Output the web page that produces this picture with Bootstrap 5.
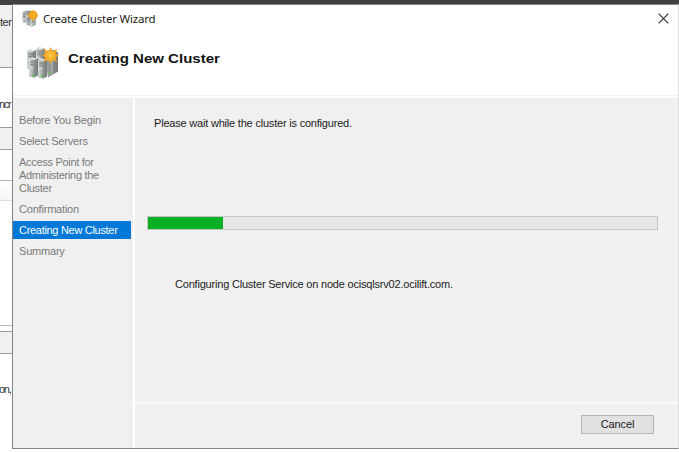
<!DOCTYPE html>
<html lang="en">
<head>
<meta charset="utf-8">
<title>Create Cluster Wizard</title>
<meta name="viewport" content="width=device-width, initial-scale=1">
<link href="https://cdn.jsdelivr.net/npm/bootstrap@5.3.0/dist/css/bootstrap.min.css" rel="stylesheet">
<style>
body{font:11px/13px "Liberation Sans",Arial,sans-serif;letter-spacing:-.2px;color:#1c1c1c;width:679px;height:452px;background:#fff}
.desk-top{height:5px;background:#414141;flex:none}
.behind{width:13px;flex:none}
.behind>div{white-space:nowrap;flex:none;color:#333;letter-spacing:-.5px}
.behind .strip-b,.behind .strip-i{letter-spacing:-1.3px;text-indent:-1px}
.strip-a{height:63px;background:#f0f0f0;border-bottom:1px solid #999;padding-top:11px}
.strip-b{height:59px;padding-top:30px}
.strip-c{height:23px;background:#f0f0f0;border:solid #999;border-width:1px 0}
.strip-d{height:31px;border-bottom:1px solid #b0b0b5}
.strip-e{height:20px;background:linear-gradient(#fff,#f4f5f7);border-bottom:1px solid #dcdfe2}
.strip-f{height:125px;border-bottom:1px solid #b4bcc0}
.strip-g{height:5px}
.strip-h{height:23px;background:#f0f0f0;border:solid #999;border-width:1px 0}
.strip-i{height:98px;padding-top:29px}
.wizard{left:12px;top:4px;width:667px;height:445px;border:1px solid #858585;border-right-color:#ddd;background:#fff}
.caption{height:27px;padding:0 9px 0 8px;flex:none}
.caption-text{font:11.5px/15px "Noto Sans","Open Sans",sans-serif;letter-spacing:-.2px;color:#222;margin-left:5px}
.banner{height:63px;padding:11px 0 0 13px;flex:none}
.banner h1{font:bold 13px/16px "Liberation Sans",Arial,sans-serif;letter-spacing:0;color:#111;margin:8px 0 0 9px;transform:scaleX(1.155);transform-origin:0 0}
.rule{height:3px;border-top:1px solid #f0f0f0;flex:none}
.steps{width:120px;background:#f0f0f0;padding-top:12.5px;flex:none;color:#7a7a7a}
.steps a{color:inherit;text-decoration:none;display:block;padding:3px 20px 3px 6px;margin-bottom:2.5px;white-space:nowrap}
.steps a.multi{margin-top:-1px;letter-spacing:-.3px}
.steps a.current{background:#0078d7;color:#fff;margin:-.5px 2px 3px 0;padding:3px 0 2px 6px;letter-spacing:-.3px}
.pane{background:#f0f0f0;margin-left:2px;min-width:0}
.msg{padding:19px 0 0 19px;height:118px}
.meter{height:14px;margin:0 20px 0 12px;border:1px solid #c6c6c6;border-radius:0;background:#e6e6e6}
.meter .progress-bar{background:#06b025}
.status{padding:48px 0 0 40px}
.foot{height:46px;border-top:2px solid #fbfbfb;padding:11px 24px 0 0}
.cancel-btn{width:73px;height:19px;padding:0;border:1px solid #b5b5b5;border-radius:0;background:#e1e1e1;font-size:11px;line-height:17px;letter-spacing:-.15px;color:#222}
.t{display:inline-block;white-space:nowrap}
</style>
</head>
<body class="overflow-hidden position-relative">
<svg width="0" height="0" class="position-absolute" aria-hidden="true">
<defs>
<linearGradient id="face"><stop offset="0" stop-color="#d8dcdc"/><stop offset=".5" stop-color="#b4baba"/><stop offset="1" stop-color="#929899"/></linearGradient>
<linearGradient id="side"><stop offset="0" stop-color="#a9adad"/><stop offset="1" stop-color="#747b7b"/></linearGradient>
<radialGradient id="glow"><stop offset="0" stop-color="#ffc943"/><stop offset="1" stop-color="#ee9410"/></radialGradient>
<g id="tower"><path d="M0 1.5 3 0 9 1v17l-3.500 2L0 19z" fill="url(#side)"/><path d="M0 1.500 5.500 2.500V20L0 19z" fill="url(#face)"/><path d="M0 1.500 3 0 9 1 5.500 2.500z" fill="#e1e4e4"/><path d="M1 4.300l3.500.7M1 6.600l3.500.7" stroke="#697272" stroke-width=".8"/><path d="M1 10l3.500.600" stroke="#eef2f2" stroke-width=".8"/><circle cx="4" cy="17.500" r=".9" fill="#4fc527"/></g>
<symbol id="cluster" viewBox="0 0 33 32"><use href="#tower" x="1" y="2"/><use href="#tower" x="10" y="0"/><path d="M18 4 26 2 32 5v19L22 30z" fill="url(#side)"/><path d="M26 9v18" stroke="#c9cdcd" stroke-width=".8"/><use href="#tower" x="3" y="10"/><use href="#tower" x="12" y="11"/><circle cx="24.500" cy="25" r="1" fill="#4fc527"/><path d="M24.500-.5 26.500 3.800 31.300 1.500 29.500 6 33 8 29.500 10 31.300 14.500 26.500 12.500 24.500 16.500 22.500 12.500 17.500 14.500 19.500 10 16 8 19.500 6 17.500 1.500 22.500 3.800z" fill="url(#glow)"/></symbol>
<symbol id="cluster-small" viewBox="0 0 16 17"><path d="M1 1.500l5-1v12l-5-1z" fill="url(#face)"/><path d="M5 1l4-.5v13l-4-1z" fill="url(#side)"/><path d="M4.500 5l4 .5V15l-4-1z" fill="url(#face)"/><path d="M9 6l5-1v9l-5 2.500z" fill="url(#face)"/><path d="M2 4h2M2 6h2M5.500 8l2 .3M5.500 10l2 .3M10 11l2 .3" stroke="#6d7879"/><path d="M6.500 13.200h1M11 14.500h1" stroke="#4fc527"/><circle cx="11.300" cy="5" r="4.300" fill="url(#glow)"/><path d="M11.300 0v10M6.300 5h10" stroke="#f6a51d"/></symbol>
</defs>
</svg>
<div class="d-flex flex-column h-100">
  <div class="desk-top"></div>
  <div class="behind d-flex flex-column">
    <div class="strip-a">ter</div><div class="strip-b">ncr</div><div class="strip-c"></div><div class="strip-d"></div><div class="strip-e"></div><div class="strip-f"></div><div class="strip-g"></div><div class="strip-h"></div><div class="strip-i">on,</div>
  </div>
</div>
<main class="wizard position-absolute d-flex flex-column">
  <header class="caption d-flex align-items-center">
    <svg width="18" height="18"><use href="#cluster-small" width="17" height="18"/></svg>
    <span class="caption-text t ms-1">Create Cluster Wizard</span>
    <svg class="ms-auto" width="11" height="11" viewBox="0 0 11 11"><path d="M.7.7l9.600 9.600M10.300.7.7 10.300" stroke="#333" stroke-width="1.200"/></svg>
  </header>
  <div class="banner d-flex align-items-start">
    <svg class="mt-1" width="33" height="33"><use href="#cluster" width="33" height="33"/></svg>
    <h1 class="t">Creating New Cluster</h1>
  </div>
  <div class="rule"></div>
  <div class="d-flex flex-grow-1">
    <nav class="steps">
      <a href="#">Before You Begin</a>
      <a href="#">Select Servers</a>
      <a href="#" class="multi">Access Point for<br>Administering the<br>Cluster</a>
      <a href="#">Confirmation</a>
      <a href="#" class="current">Creating New Cluster</a>
      <a href="#">Summary</a>
    </nav>
    <section class="pane flex-grow-1 d-flex flex-column">
      <div class="msg"><span class="t">Please wait while the cluster is configured.</span></div>
      <div class="meter progress"><div class="progress-bar" style="width:14.800%"></div></div>
      <div class="status"><span class="t">Configuring Cluster Service on node ocisqlsrv02.ocilift.com.</span></div>
      <div class="foot mt-auto d-flex justify-content-end align-items-start"><button class="btn cancel-btn">Cancel</button></div>
    </section>
  </div>
</main>
<script src="https://cdn.jsdelivr.net/npm/bootstrap@5.3.0/dist/js/bootstrap.bundle.min.js"></script>
</body>
</html>
